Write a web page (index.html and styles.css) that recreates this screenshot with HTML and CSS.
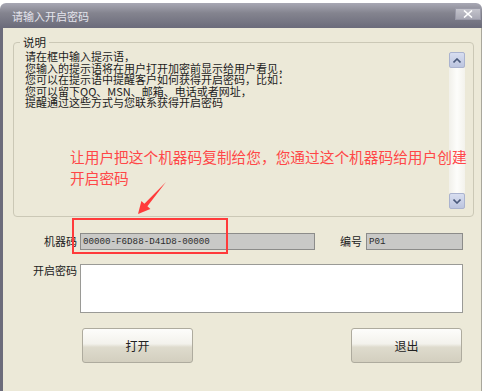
FILE: index.html
```html
<html>
  <head>
    <meta charset="utf-8">
    <link rel="stylesheet" href="styles.css">
  </head>
  <body>
    <div class="window">
      <div class="titlebar">
        <span class="title">请输入开启密码</span>
        <span class="close">
          <svg width="10" height="8" viewBox="0 0 10 8"><path d="M1 0.5 L9 7.5 M9 0.5 L1 7.5" stroke="#fff" stroke-width="1.6"/></svg>
        </span>
      </div>
      <div class="client">
        <fieldset class="group">
          <legend>说明</legend>
          <div class="group-body">
            <div class="tips">请在框中输入提示语，<br>您输入的提示语将在用户打开加密前显示给用户看见，<br>您可以在提示语中提醒客户如何获得开启密码，比如：<br>您可以留下QQ、MSN、邮箱、电话或者网址，<br>提醒通过这些方式与您联系获得开启密码</div>
            <div class="scroll">
              <div class="scroll-btn">
                <svg width="8" height="5" viewBox="0 0 8 5"><path d="M0.5 4.5 L4 1 L7.5 4.5" fill="none" stroke="#4a5a7c" stroke-width="1.6"/></svg>
              </div>
              <div class="scroll-track"></div>
              <div class="scroll-btn">
                <svg width="8" height="5" viewBox="0 0 8 5"><path d="M0.5 0.5 L4 4 L7.5 0.5" fill="none" stroke="#4a5a7c" stroke-width="1.6"/></svg>
              </div>
            </div>
          </div>
        </fieldset>

        <div class="row">
          <span class="lbl">机器码</span>
          <div class="field field-code">00000-F6D88-D41D8-00000</div>
          <span class="lbl-no">编号</span>
          <div class="field field-no">P01</div>
        </div>
        <div class="row row-pwd">
          <span class="lbl">开启密码</span>
          <div class="textarea"></div>
        </div>
        <div class="row row-btns">
          <button class="btn btn-open">打开</button>
          <button class="btn btn-exit">退出</button>
        </div>

        <!-- red annotation drawn over the dialog -->
        <p class="note">让用户把这个机器码复制给您，您通过这个机器码给用户创建<br>开启密码</p>
        <div class="mark"></div>
        <svg class="arrow" width="40" height="40" viewBox="0 0 40 40">
          <polygon points="36,4 17.4,28.3 20.4,30.9 8,36 11.4,23.1 14.4,25.7" fill="#ff3b3b"/>
        </svg>
      </div>
    </div>
  </body>
</html>
```

FILE: styles.css
```css
html, body {
  margin: 0;
  overflow: hidden;
}

body {
  width: 484px;
  height: 391px;
  background-color: #fff;
  font-family: "Noto Sans CJK SC", "Liberation Sans", sans-serif;
  color: #222;
}

.window {
  width: 482px;
  margin-top: 3px;
  display: flex;
  flex-direction: column;
}

/* ===== Title bar ===== */
.titlebar {
  height: 25px;
  display: flex;
  justify-content: space-between;
  align-items: flex-start;
  border-radius: 6px 6px 0 0;
  background: linear-gradient(#a8a8b4, #84848f 40%, #6b6b7a);
}

.title {
  margin: 5px 0 0 12px;
  font-size: 11px;
  line-height: 16px;
  color: #e4e4ec;
}

.close {
  width: 26px;
  height: 12px;
  margin: 5px 1px 0 0;
  display: flex;
  justify-content: center;
  align-items: center;
  background: linear-gradient(#c4c4cc, #a8a8b4);
  border: 1px solid #9a9aa8;
  box-sizing: border-box;
}

/* ===== Client area ===== */
.client {
  position: relative;
  height: 370px;
  padding: 7px 7px 0 10px;
  background-color: #ece9d8;
  border-left: 3px solid #6c6c7b;
  border-right: 1px solid #a9a79c;
}

.group {
  margin: 0;
  padding: 2px 8px 7px 11px;
  border: 1px solid #cbc8b6;
  border-radius: 4px;
}

.group legend {
  margin-left: -5px;
  padding: 0 3px;
  font-size: 11.5px;
  line-height: 14px;
  color: #222;
}

.group-body {
  display: flex;
}

.tips {
  flex: 1;
  font-size: 11px;
  line-height: 11.5px;
  color: #1c1c1c;
  white-space: nowrap;
}

.scroll {
  width: 16px;
  height: 157px;
  margin-top: 1px;
  display: flex;
  flex-direction: column;
}

.scroll-btn {
  height: 16px;
  display: flex;
  justify-content: center;
  align-items: center;
  background: linear-gradient(#d8def0, #bcc5df);
  border: 1px solid #aab3cf;
  border-radius: 2px;
  box-sizing: border-box;
}

.scroll-track {
  flex: 1;
  background: linear-gradient(90deg, #f1f0ea, #fdfdfb 50%, #f3f2ec);
}

/* ===== Form ===== */
.row {
  display: flex;
  align-items: center;
  margin-top: 16px;
  font-size: 11px;
}

.lbl {
  width: 64px;
  text-align: right;
  line-height: 17px;
}

.field {
  height: 17px;
  box-sizing: border-box;
  padding-left: 2px;
  background-color: #c9c9c7;
  border: 1px solid #8c8c8a;
  font-family: "Liberation Mono", monospace;
  font-size: 9.2px;
  line-height: 15px;
  color: #2c2c2c;
}

.field-code {
  width: 235px;
  margin-left: 3px;
}

.lbl-no {
  margin-left: 25px;
  width: 24px;
  line-height: 17px;
}

.field-no {
  width: 97px;
  margin-left: 2px;
}

.row-pwd {
  align-items: flex-start;
  margin-top: 14px;
}

.row-pwd .lbl {
  margin-top: -2px;
}

.textarea {
  width: 383px;
  height: 49px;
  margin-left: 3px;
  box-sizing: border-box;
  background-color: #fff;
  border: 1px solid #9a9a96;
}

.row-btns {
  margin-top: 15px;
}

.btn {
  width: 111px;
  height: 35px;
  padding: 0;
  border: 1px solid #aeab9e;
  border-radius: 3px;
  background: linear-gradient(#fdfdfb, #f3f2ec 45%, #dedbcd 55%, #d3cfbf);
  font-family: inherit;
  font-size: 12px;
  color: #222;
}

.btn-open {
  margin-left: 69px;
}

.btn-exit {
  margin-left: 158px;
}

/* ===== Red annotation ===== */
.note {
  position: absolute;
  left: 67px;
  top: 118px;
  margin: 0;
  font-size: 14.7px;
  line-height: 21px;
  color: #ff4747;
  white-space: nowrap;
}

.mark {
  position: absolute;
  left: 69px;
  top: 190px;
  width: 156px;
  height: 36px;
  box-sizing: border-box;
  border: 2px solid #ff3b3b;
}

.arrow {
  position: absolute;
  left: 127px;
  top: 150px;
}
```
